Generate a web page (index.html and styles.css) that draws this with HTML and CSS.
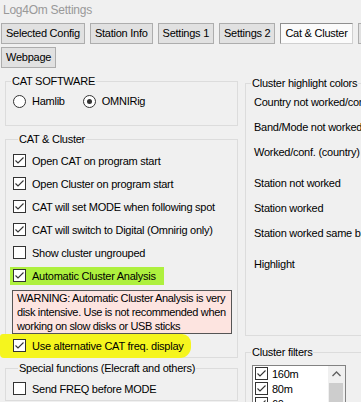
FILE: index.html
```html
<!DOCTYPE html>
<html lang="en">
<head>
    <meta charset="UTF-8">
    <meta name="viewport" content="width=device-width, initial-scale=1.0">
    <title>Log4Om Settings</title>
    <link rel="stylesheet" href="styles.css">
</head>
<body>
    <div class="window">
        <div class="titlebar">Log4Om Settings</div>

        <div class="tabs">
            <div class="tab">Selected Config</div>
            <div class="tab">Station Info</div>
            <div class="tab">Settings 1</div>
            <div class="tab">Settings 2</div>
            <div class="tab active">Cat &amp; Cluster</div>
            <div class="tab"><span class="tab-icon"></span>Alerts</div>
            <div class="tab">Webpage</div>
        </div>

        <div class="panels">
            <div class="col-left">
                <fieldset class="group">
                    <legend>CAT SOFTWARE</legend>
                    <div class="radio-row">
                        <label class="radio"><span class="circle"></span>Hamlib</label>
                        <label class="radio"><span class="circle on"></span>OMNIRig</label>
                    </div>
                </fieldset>

                <fieldset class="group group-cat">
                    <legend>CAT &amp; Cluster</legend>
                    <div class="checks">
                        <label class="check"><span class="box"><svg viewBox="0 0 11 11"><polyline points="1.5,5.5 4,8 9.5,2.5"/></svg></span>Open CAT on program start</label>
                        <label class="check"><span class="box"><svg viewBox="0 0 11 11"><polyline points="1.5,5.5 4,8 9.5,2.5"/></svg></span>Open Cluster on program start</label>
                        <label class="check"><span class="box"><svg viewBox="0 0 11 11"><polyline points="1.5,5.5 4,8 9.5,2.5"/></svg></span>CAT will set MODE when following spot</label>
                        <label class="check"><span class="box"><svg viewBox="0 0 11 11"><polyline points="1.5,5.5 4,8 9.5,2.5"/></svg></span>CAT will switch to Digital (Omnirig only)</label>
                        <label class="check"><span class="box"></span>Show cluster ungrouped</label>
                        <label class="check"><span class="hl-green"><span class="box"><svg viewBox="0 0 11 11"><polyline points="1.5,5.5 4,8 9.5,2.5"/></svg></span>Automatic Cluster Analysis</span></label>
                    </div>
                    <div class="warning">
                        WARNING: Automatic Cluster Analysis is very disk intensive. Use is not recommended when working on slow disks or USB sticks
                    </div>
                    <label class="check"><span class="hl-yellow"><span class="box"><svg viewBox="0 0 11 11"><polyline points="1.5,5.5 4,8 9.5,2.5"/></svg></span>Use alternative CAT freq. display</span></label>
                </fieldset>

                <fieldset class="group group-special">
                    <legend>Special functions (Elecraft and others)</legend>
                    <label class="check"><span class="box"></span>Send FREQ before MODE</label>
                </fieldset>
            </div>

            <div class="col-right">
                <fieldset class="group group-colors">
                    <legend>Cluster highlight colors</legend>
                    <div class="color-row">Country not worked/confirmed</div>
                    <div class="color-row">Band/Mode not worked</div>
                    <div class="color-row">Worked/conf. (country)</div>
                    <div class="color-row spaced">Station not worked</div>
                    <div class="color-row">Station worked</div>
                    <div class="color-row">Station worked same band</div>
                    <div class="color-row spaced">Highlight</div>
                </fieldset>

                <fieldset class="group group-filters">
                    <legend>Cluster filters</legend>
                    <div class="listbox">
                        <div class="list-items">
                            <div class="list-item"><span class="box"><svg viewBox="0 0 11 11"><polyline points="1.5,5.5 4,8 9.5,2.5"/></svg></span>160m</div>
                            <div class="list-item"><span class="box"><svg viewBox="0 0 11 11"><polyline points="1.5,5.5 4,8 9.5,2.5"/></svg></span>80m</div>
                            <div class="list-item"><span class="box"><svg viewBox="0 0 11 11"><polyline points="1.5,5.5 4,8 9.5,2.5"/></svg></span>60m</div>
                        </div>
                        <div class="scrollbar">
                            <div class="scroll-btn"><svg viewBox="0 0 17 17"><polyline points="4.5,10 8.5,6 12.5,10"/></svg></div>
                            <div class="scroll-thumb"></div>
                        </div>
                    </div>
                </fieldset>
            </div>
        </div>
    </div>
</body>
</html>
```

FILE: styles.css
```css
* {
    box-sizing: border-box;
}
body {
    margin: 0;
    background-color: #f0f0f0;
    font-family: "Liberation Sans", Arial, sans-serif;
    font-size: 11px;
    letter-spacing: -0.25px;
    color: #000;
    overflow: hidden;
}
.window {
    width: 520px;
    height: 402px;
}
.titlebar {
    height: 23px;
    padding-left: 3px;
    line-height: 20px;
    font-size: 12px;
    color: #999;
}
.tabs {
    display: flex;
    flex-wrap: wrap;
    gap: 3px 5px;
    width: 440px;
    padding-left: 1px;
}
.tab {
    height: 21px;
    line-height: 19px;
    padding: 0 4px;
    border: 1px solid #adadad;
    background-color: #e1e1e1;
}
.tab.active {
    background-color: #fbfbfb;
    border-color: #8f8f8f #d0d0d0 #d0d0d0 #8f8f8f;
}
.tab-icon {
    display: inline-block;
    width: 4px;
    height: 4px;
    margin-right: 4px;
    border-radius: 50%;
    background-color: #e8a040;
    vertical-align: middle;
}
.panels {
    display: flex;
    gap: 7px;
    margin-top: 7px;
    padding-left: 5px;
}
.col-left {
    width: 233px;
    flex-shrink: 0;
}
.col-right {
    flex: 1;
    margin-top: 2px;
}
.group {
    margin: 0;
    padding: 0;
    min-width: 0;
    border: 1px solid #dcdcdc;
}
.group legend {
    margin-left: 5px;
    padding: 0 1px;
    line-height: 13px;
}

/* radios */
.radio-row {
    display: flex;
    gap: 18px;
    height: 20px;
    margin-top: 3px;
    margin-bottom: 14px;
    padding-left: 7px;
}
.radio {
    display: flex;
    align-items: center;
}
.circle {
    width: 13px;
    height: 13px;
    margin-right: 6px;
    border: 1px solid #333;
    border-radius: 50%;
    background-color: #fff;
    display: flex;
    align-items: center;
    justify-content: center;
}
.circle.on::after {
    content: "";
    width: 5px;
    height: 5px;
    border-radius: 50%;
    background-color: #333;
}

/* checkboxes */
.group-cat {
    margin-top: 7px;
    padding: 3px 0 0 7px;
}
.group-special {
    margin-top: 4px;
    padding: 2px 0 0 7px;
}
.check {
    display: flex;
    align-items: center;
    height: 23px;
}
.box {
    width: 13px;
    height: 13px;
    flex-shrink: 0;
    margin-right: 6px;
    border: 1px solid #333;
    background-color: #fff;
}
.box svg {
    display: block;
    width: 11px;
    height: 11px;
    fill: none;
    stroke: #333;
    stroke-width: 1.1;
}
.hl-green {
    display: flex;
    align-items: center;
    height: 18px;
    margin-left: -3px;
    padding: 0 8px 0 3px;
    background-color: #aef03e;
}
.hl-yellow {
    display: flex;
    align-items: center;
    height: 24px;
    margin-left: -13px;
    padding: 0 7px 0 13px;
    background-color: #f5f51e;
    border-radius: 3px 9px 11px 4px;
}
.warning {
    width: 220px;
    margin: 3px 0 0 -1px;
    padding: 0 0 0 4px;
    border: 1px solid #555;
    background-color: #fde4e0;
    line-height: 14px;
    letter-spacing: -0.35px;
}

/* right column */
.color-row {
    height: 25px;
    line-height: 25px;
    padding-left: 8px;
    white-space: nowrap;
}
.color-row.spaced {
    margin-top: 6px;
}
.group-colors {
    padding-bottom: 58px;
}
.group-filters {
    margin-top: 10px;
    height: 80px;
    border-bottom: none;
}
.listbox {
    display: flex;
    width: 94px;
    height: 60px;
    margin: 6px 0 0 6px;
    border: 1px solid #828282;
    background-color: #fff;
}
.list-items {
    flex: 1;
    padding-left: 2px;
}
.list-item {
    display: flex;
    align-items: center;
    height: 15px;
}
.list-item .box {
    margin-right: 4px;
}
.scrollbar {
    width: 17px;
    background-color: #f0f0f0;
}
.scroll-btn svg {
    display: block;
    width: 17px;
    height: 17px;
    fill: none;
    stroke: #606060;
    stroke-width: 1.3;
}
.scroll-thumb {
    height: 40px;
    margin: 0 2px 0 1px;
    background-color: #cdcdcd;
}
```
